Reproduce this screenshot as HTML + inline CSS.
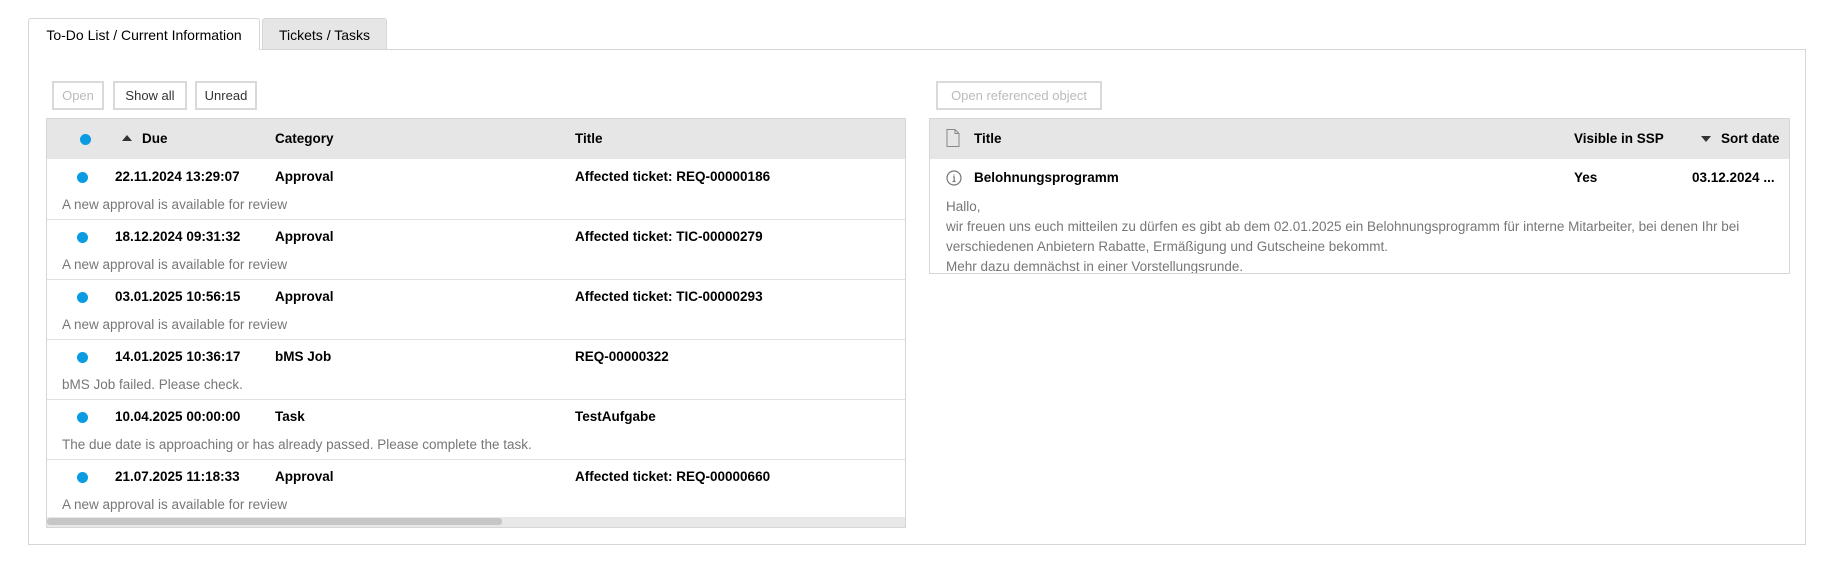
<!DOCTYPE html>
<html><head><meta charset="utf-8"><style>
*{box-sizing:border-box;margin:0;padding:0}
body{width:1841px;height:566px;background:#fff;font-family:"Liberation Sans",sans-serif;font-size:13.5px;color:#000;position:relative;overflow:hidden}
.abs{position:absolute}
.tab{position:absolute;top:18px;height:32px;border:1px solid #d6d6d6;border-bottom:none;border-radius:3px 3px 0 0;padding-top:8px;text-align:center;font-size:14px}
.panel{position:absolute;left:28px;top:49px;width:1778px;height:496px;border:1px solid #d6d6d6}
.btn{position:absolute;top:81px;height:29px;border:2px solid #d9d9d9;font-size:13px;text-align:center;line-height:25px;color:#333}
.tbl{position:absolute;border:1px solid #d6d6d6;overflow:hidden}
.hdr{position:absolute;left:0;right:0;top:0;height:40px;background:#e6e6e6}
.b{font-weight:bold}
.g{color:#777}
.dot{position:absolute;width:11px;height:11px;border-radius:50%;background:#0a9be2}
.sep{position:absolute;left:0;right:0;height:1px;background:#e0e0e0}
</style></head><body>
<div class="panel"></div>
<div class="tab" style="left:28px;width:232px;background:#fff;height:32px;z-index:2">To-Do List / Current Information</div>
<div class="tab" style="left:262px;width:125px;background:#e6e6e6;height:31px">Tickets / Tasks</div>

<div class="btn" style="left:52px;width:52px;color:#bbb">Open</div>
<div class="btn" style="left:113px;width:74px">Show all</div>
<div class="btn" style="left:195px;width:62px">Unread</div>

<div class="tbl" style="left:46px;top:118px;width:860px;height:410px">
 <div class="hdr">
  <div class="dot" style="left:33px;top:15px"></div>
  <div class="abs" style="left:75px;top:16px;width:0;height:0;border-left:5px solid transparent;border-right:5px solid transparent;border-bottom:6px solid #333"></div>
  <div class="abs b" style="left:95px;top:12px">Due</div>
  <div class="abs b" style="left:228px;top:12px">Category</div>
  <div class="abs b" style="left:528px;top:12px">Title</div>
 </div>
 <div id="rows"></div>
 <div class="abs" style="left:0;right:0;top:398px;height:12px;background:#e8e8e8"></div>
 <div class="abs" style="left:0;width:455px;top:399px;height:7px;background:#c6c6c6;border-radius:3px"></div>
</div>

<div class="btn" style="left:936px;width:166px;color:#bbb">Open referenced object</div>
<div class="tbl" style="left:929px;top:118px;width:861px;height:156px">
 <div class="hdr">
  <svg class="abs" style="left:16px;top:10px" width="14" height="18" viewBox="0 0 14 18"><path d="M1 .5h8l4 4v13H1z M9 .5v4h4" fill="none" stroke="#888" stroke-width="1"/></svg>
  <div class="abs b" style="left:44px;top:12px">Title</div>
  <div class="abs b" style="left:644px;top:12px">Visible in SSP</div>
  <div class="abs" style="left:771px;top:17px;width:0;height:0;border-left:5px solid transparent;border-right:5px solid transparent;border-top:6px solid #333"></div>
  <div class="abs b" style="left:791px;top:12px">Sort date</div>
 </div>
 <svg class="abs" style="left:16px;top:51px" width="16" height="16" viewBox="0 0 16 16"><circle cx="8" cy="8" r="7" fill="none" stroke="#777" stroke-width="1.2"/><path d="M8 4.5v1M7 7h1.2v4.5M6.5 11.5h3" stroke="#777" stroke-width="1.2" fill="none"/></svg>
 <div class="abs b" style="left:44px;top:51px">Belohnungsprogramm</div>
 <div class="abs b" style="left:644px;top:51px">Yes</div>
 <div class="abs b" style="left:762px;top:51px">03.12.2024 ...</div>
 <div class="abs g" style="left:16px;top:78px;line-height:20px;width:830px">Hallo,<br>wir freuen uns euch mitteilen zu dürfen es gibt ab dem 02.01.2025 ein Belohnungsprogramm für interne Mitarbeiter, bei denen Ihr bei verschiedenen Anbietern Rabatte, Ermäßigung und Gutscheine bekommt.<br>Mehr dazu demnächst in einer Vorstellungsrunde.</div>
</div>

<script>
var d=[["22.11.2024 13:29:07","Approval","Affected ticket: REQ-00000186","A new approval is available for review"],
["18.12.2024 09:31:32","Approval","Affected ticket: TIC-00000279","A new approval is available for review"],
["03.01.2025 10:56:15","Approval","Affected ticket: TIC-00000293","A new approval is available for review"],
["14.01.2025 10:36:17","bMS Job","REQ-00000322","bMS Job failed. Please check."],
["10.04.2025 00:00:00","Task","TestAufgabe","The due date is approaching or has already passed. Please complete the task."],
["21.07.2025 11:18:33","Approval","Affected ticket: REQ-00000660","A new approval is available for review"]];
var h="";d.forEach(function(r,i){var t=40+i*60;
h+='<div class="dot" style="left:30px;top:'+(t+13)+'px"></div><div class="abs b" style="left:68px;top:'+(t+10)+'px">'+r[0]+'</div><div class="abs b" style="left:228px;top:'+(t+10)+'px">'+r[1]+'</div><div class="abs b" style="left:528px;top:'+(t+10)+'px">'+r[2]+'</div><div class="abs g" style="left:15px;top:'+(t+38)+'px">'+r[3]+'</div>';
if(i<5)h+='<div class="sep" style="top:'+(t+60)+'px"></div>';});
document.getElementById("rows").innerHTML=h;
</script>
</body></html>
